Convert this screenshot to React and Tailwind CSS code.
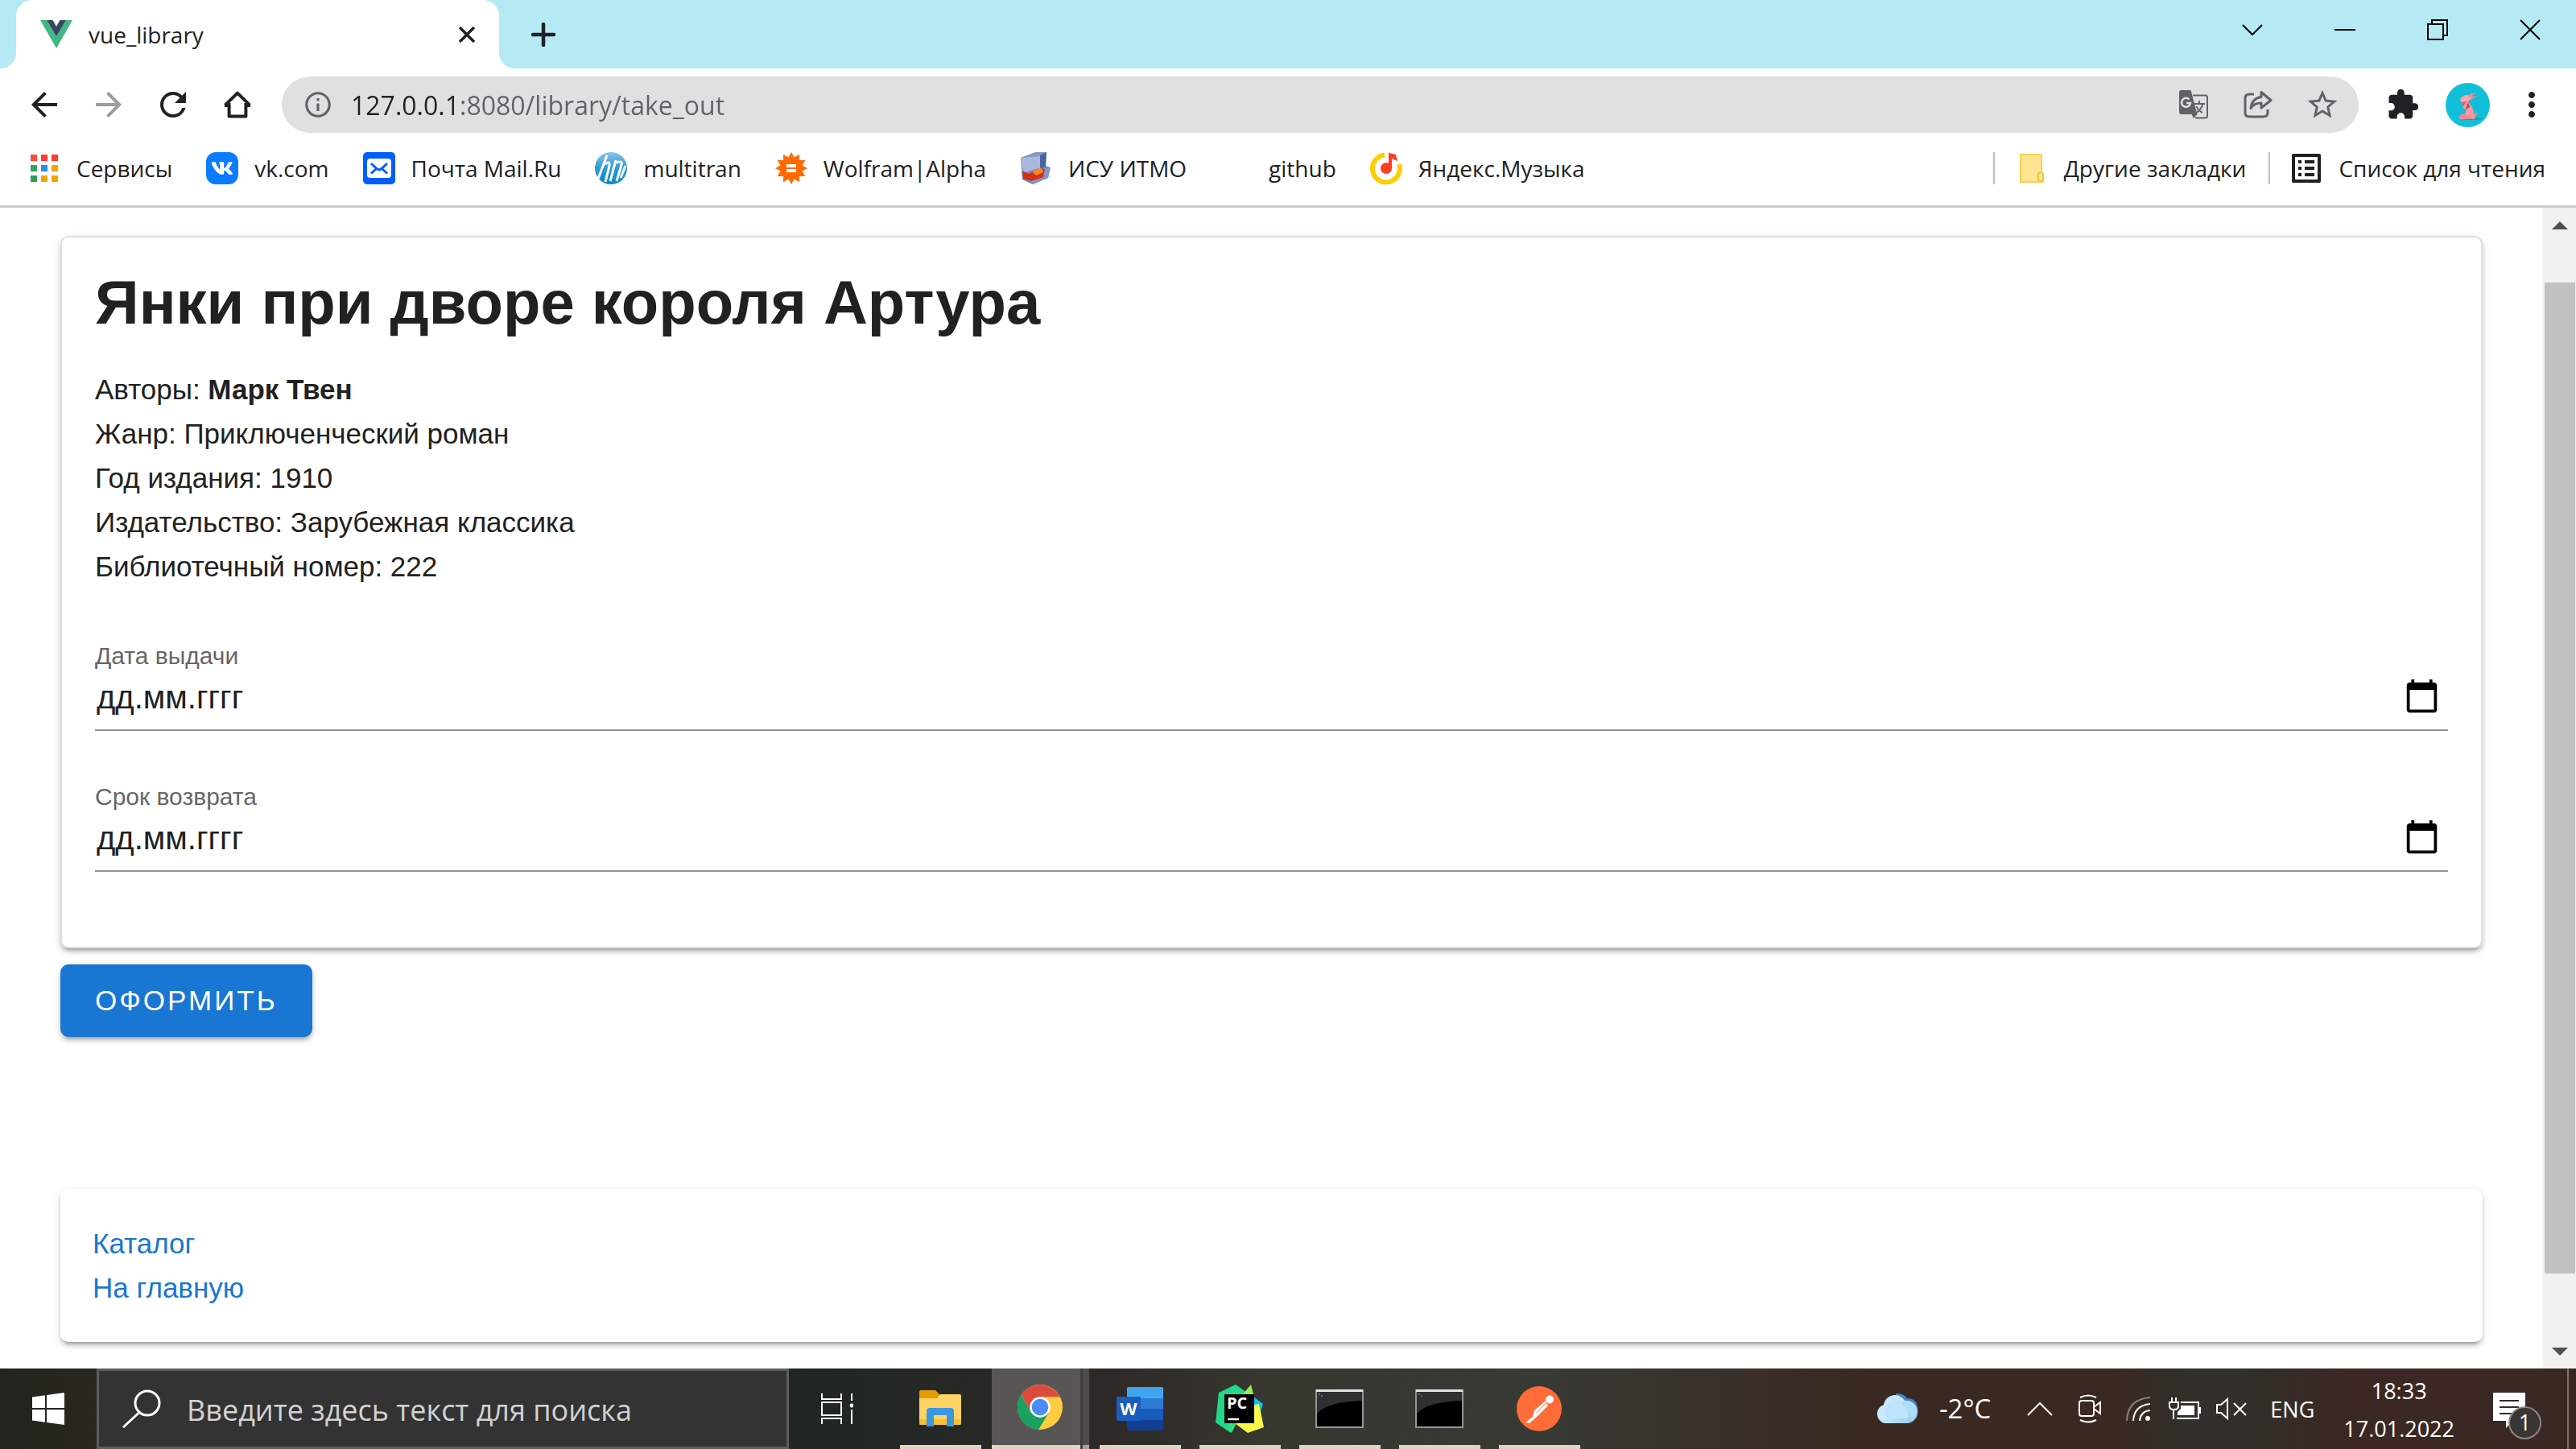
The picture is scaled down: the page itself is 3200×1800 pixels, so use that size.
import React from 'react';
import {
  MdArrowBack,
  MdArrowForward,
  MdRefresh,
  MdInfoOutline,
  MdStarBorder,
  MdExtension,
  MdMoreVert,
  MdListAlt,
  MdCalendarToday,
} from 'react-icons/md';
import { FaVk } from 'react-icons/fa';

/* ---------- Browser icons ---------- */

function VueLogo() {
  return (
    <svg viewBox="0 0 40 35" className="w-10 h-[35px]" aria-hidden="true">
      <path d="M0 0h8l12 20.500L32 0h8L20 35z" fill="#41b883" />
      <path d="M8 0h7.500L20 8l4.500-8H32L20 20.500z" fill="#35495e" />
    </svg>
  );
}

function HomeIcon() {
  return (
    <svg viewBox="0 0 24 24" className="size-12" fill="none" stroke="currentColor" strokeWidth="2" aria-hidden="true">
      <path d="M4.300 12.300 12 4.800l7.700 7.500M6.800 11v8.200h10.400V11" strokeLinejoin="round" />
      <path d="M4 12.500h2.800M17.200 12.500H20" />
    </svg>
  );
}

function TranslateIcon() {
  return (
    <svg viewBox="0 0 36 36" className="size-9" fill="none" aria-hidden="true">
      <path d="M17 6.500h15.500q2.500 0 2.500 2.500v23q0 2.500-2.500 2.500H20" stroke="currentColor" strokeWidth="2" />
      <path d="M3 0h11.500l8 30-4.500 5-2.500-5H3q-3 0-3-3V3q0-3 3-3z" fill="currentColor" />
      <path d="M12.500 11.500A5.500 5.500 0 1 0 14 16H9" stroke="#e0e0e0" strokeWidth="2.500" />
      <path d="M19 17h13M25 13v4M29.500 17q-2 7-8 11M21.500 20q2 5 7.500 8" stroke="currentColor" strokeWidth="2" />
    </svg>
  );
}

function ShareIcon() {
  return (
    <svg viewBox="0 0 36 36" className="size-9" fill="none" stroke="currentColor" strokeWidth="3" strokeLinejoin="round" aria-hidden="true">
      <path d="M13 5H7.500Q2 5 2 10v18q0 5 5.500 5h17q5.500 0 5.500-5v-4" />
      <path d="M22 2.500 34 12.500 22 22v-6q-9 0-13 6.500Q10.500 10 22 8.500z" />
    </svg>
  );
}

function Avatar() {
  return (
    <svg viewBox="0 0 55 55" className="size-[55px]" aria-hidden="true">
      <circle cx="27.500" cy="27.500" r="27.500" fill="#12bfd8" />
      <ellipse cx="33" cy="44.500" rx="13" ry="1.500" fill="#0a9db5" />
      <path d="M26 16 38 11l-6 6 8-1-9 5z" fill="#f08a93" />
      <path d="M18 20q3-5 9-5l5 4-4 4-9 1z" fill="#fba5ab" />
      <path d="M21 24l9-2-2 7-11-1 5-2z" fill="#e0656f" />
      <path d="M27 22l6 8 4 15H22l4-12-5-2z" fill="#fb9aa2" />
      <path d="M28 24l-3 9 5-3z" fill="#b8404d" />
      <path d="M17 45v-4l4-3 9 4 7 3zM36 38l4-2-1 4-3 1z" fill="#f48590" />
    </svg>
  );
}

/* ---------- Bookmark icons ---------- */

function AppsIcon() {
  const colors = ['#ff4a3d', '#ff3b30', '#ff3b30', '#34a35a', '#2b8cf0', '#f5a500', '#2f9e57', '#f2a600', '#f2a600'];
  return (
    <svg viewBox="0 0 40 40" className="size-10" aria-hidden="true">
      {colors.map((c, i) => (
        <rect key={i} x={3 + (i % 3) * 13} y={3 + Math.floor(i / 3) * 13} width="8" height="8" fill={c} />
      ))}
    </svg>
  );
}

function VkIcon() {
  return (
    <span className="flex size-10 items-center justify-center rounded-xl bg-[#0a7cff] text-white">
      <FaVk className="size-7" />
    </span>
  );
}

function MailIcon() {
  return (
    <svg viewBox="0 0 40 40" className="size-10" aria-hidden="true">
      <rect width="40" height="40" rx="5" fill="#005ff9" />
      <rect x="5" y="8" width="30" height="24" rx="4" fill="#fff" />
      <path d="M10 14l7 6.500q3 2.500 6 0l7-6.500M10 26.500l6-5.500M30 26.500l-6-5.500" fill="none" stroke="#005ff9" strokeWidth="3" />
    </svg>
  );
}

function MultitranIcon() {
  return (
    <svg viewBox="0 0 40 40" className="size-10" aria-hidden="true">
      <defs>
        <linearGradient id="mt" x1="0" y1="0" x2="0" y2="1">
          <stop offset="0" stopColor="#8fc0e8" />
          <stop offset=".5" stopColor="#2b9bd8" />
          <stop offset="1" stopColor="#0a86cc" />
        </linearGradient>
      </defs>
      <circle cx="20" cy="20" r="20" fill="url(#mt)" />
      <path d="M15 4 4 33M12 15q7-5 6 2l-5 20M26 10l-7 26M27 13q8-3 6 3l-6 20M38 17l-6 15" fill="none" stroke="#fff" strokeWidth="3" />
    </svg>
  );
}

function WolframIcon() {
  const points = Array.from({ length: 24 }, (_, i) => {
    const r = i % 2 ? 14 : 20;
    const a = (Math.PI * i) / 12 - Math.PI / 2;
    return `${20 + r * Math.cos(a)},${20 + r * Math.sin(a)}`;
  }).join(' ');
  return (
    <svg viewBox="0 0 40 40" className="size-10" aria-hidden="true">
      <polygon points={points} fill="#ff6a00" />
      <path d="M14 17h12M14 23h12" stroke="#fff" strokeWidth="4" />
    </svg>
  );
}

function IsuIcon() {
  return (
    <svg viewBox="0 0 40 40" className="size-10" aria-hidden="true">
      <path d="M1 7 20 0h13l-1 17 6 2-3 13-19 8L3 34z" fill="#7288bd" />
      <path d="M1 7 25 4l1 15L4 26z" fill="#a9b9dc" />
      <path d="M1 7 20 0h13l-8 5z" fill="#8798c4" />
      <path d="M25 4l8-4-1 18-7 3z" fill="#4a62a0" />
      <path d="M3 23l8 4 15-7 7 2-4 10-14 4-11-3z" fill="#d62f16" />
      <path d="M15 24l11-5 3 6-9 4z" fill="#ff8424" />
      <path d="M31 20l7-1-3 13-19 8-2-4 15-5z" fill="#8398c8" />
    </svg>
  );
}

function YandexMusicIcon() {
  return (
    <svg viewBox="0 0 40 40" className="size-10" aria-hidden="true">
      <path d="M18 3.500A17 17 0 1 0 36 15" fill="none" stroke="#ffcc00" strokeWidth="6" />
      <circle cx="20" cy="20" r="7" fill="#ff3d20" />
      <path d="M23 0q2 2 5 2l4 1 2 8-7-3v12h-4z" fill="#ff3d20" />
    </svg>
  );
}

function FolderIcon() {
  return (
    <svg viewBox="0 0 40 40" className="size-10" aria-hidden="true">
      <path d="M6 3h24q2 0 2 2v20l2 2v8q0 2-2 2H6z" fill="#ffe591" stroke="#f7d04f" strokeWidth="2" />
      <path d="M28 36V28q0-3 3-3t3 3v8z" fill="#ffe591" stroke="#f0c63f" strokeWidth="2" />
    </svg>
  );
}

/* ---------- Taskbar icons ---------- */

function WindowsLogo() {
  return (
    <svg viewBox="0 0 40 40" className="size-10" fill="#fff" aria-hidden="true">
      <path d="M0 5.500 16 3.200V19H0zM18 3l22-3v19H18zM0 21h16v15.800L0 34.500zM18 21h22v19l-22-3z" />
    </svg>
  );
}

function SearchIcon() {
  return (
    <svg viewBox="0 0 48 48" className="size-12" fill="none" stroke="#fff" strokeWidth="3" aria-hidden="true">
      <circle cx="31" cy="17" r="15" />
      <path d="M21 28.500 1 47" />
    </svg>
  );
}

function TaskViewIcon() {
  return (
    <svg viewBox="0 0 40 38" className="h-[38px] w-10" fill="none" stroke="#fff" strokeWidth="2" aria-hidden="true">
      <path d="M1 0v7h24V0M1 11h24v16H1zM1 38v-7h24v7M38 0v9M38 20v18" />
      <circle cx="38" cy="15" r="2.500" fill="#fff" stroke="none" />
    </svg>
  );
}

function ExplorerIcon() {
  return (
    <svg viewBox="0 0 54 46" className="h-[46px] w-[54px]" aria-hidden="true">
      <path d="M1 2q0-2 2-2h18l5 5v5H1z" fill="#e19c00" />
      <path d="M1 10h22l4-5h24q2 0 2 2v34q0 2-2 2H3q-2 0-2-2z" fill="#ffd463" />
      <path d="M1 36h52v5q0 2-2 2H3q-2 0-2-2z" fill="#f7bf35" />
      <path d="M10 45V26q0-4 4-4h26q4 0 4 4v19h-9V31H19v14z" fill="#3b98e0" />
    </svg>
  );
}

function ChromeIcon() {
  return (
    <svg viewBox="0 0 56 56" className="size-14" aria-hidden="true">
      <circle cx="28" cy="28" r="28" fill="#ffcd40" />
      <path d="M52.500 15.200H28L28 28 16.700 34.500 4.500 12.700A28 28 0 0 1 52.500 15.200z" fill="#de4b3e" />
      <path d="M4.500 12.700A28 28 0 0 0 26 55.900L39.200 34.500 28 41 16.700 34.500z" fill="#18a160" />
      <circle cx="28" cy="28" r="12.800" fill="#fff" />
      <circle cx="28" cy="28" r="10.300" fill="#4a8cf7" />
    </svg>
  );
}

function WordIcon() {
  return (
    <svg viewBox="0 0 58 54" className="h-[54px] w-[58px]" aria-hidden="true">
      <path d="M13 2q0-2 2-2h41q2 0 2 2v12H13z" fill="#41a5ee" />
      <path d="M13 14h45v13H13z" fill="#2b7cd3" />
      <path d="M13 27h45v14H13z" fill="#185abd" />
      <path d="M13 41h45v11q0 2-2 2H15q-2 0-2-2z" fill="#103f91" />
      <rect y="12" width="30" height="30" rx="2" fill="#1a5dbe" />
      <text x="15" y="35" textAnchor="middle" fontFamily="Open Sans, sans-serif" fontWeight="700" fontSize="22" fill="#fff">W</text>
    </svg>
  );
}

function PyCharmIcon() {
  return (
    <svg viewBox="0 0 60 60" className="size-[60px]" aria-hidden="true">
      <path d="M4 10 25 0l14 10-14 35-6 15L0 47z" fill="#21d789" />
      <path d="M32 14 44 0l4 15z" fill="#9be85a" />
      <path d="M46 14 59 24 52 45 44 40z" fill="#07c3f2" />
      <path d="M12 48 20 30 54 24 60 53 40 60 24 48z" fill="#fcf84a" />
      <path d="M8 40l14-10 4 18-6 12z" fill="#35dc7c" />
      <rect x="11" y="12" width="37" height="36" fill="#000" />
      <text x="14" y="30" fontFamily="Open Sans, sans-serif" fontWeight="700" fontSize="20" fill="#fff">PC</text>
      <path d="M15 43h14" stroke="#fff" strokeWidth="2.500" />
    </svg>
  );
}

function ConsoleIcon() {
  return (
    <svg viewBox="0 0 60 48" className="h-12 w-[60px]" aria-hidden="true">
      <rect width="60" height="48" fill="#8f979c" />
      <rect x="1" width="58" height="3" fill="#dfe5e8" />
      <rect x="2" y="3" width="56" height="43" fill="#000" />
      <path d="M2 3h56v11Q16 15 2 30z" fill="#303030" />
      <path d="M4 6h2M7 8h2" stroke="#999" strokeWidth="1" />
    </svg>
  );
}

function PostmanIcon() {
  return (
    <svg viewBox="0 0 56 56" className="size-14" aria-hidden="true">
      <circle cx="28" cy="28" r="28" fill="#ff6c37" />
      <circle cx="41" cy="16.500" r="5" fill="#fff" />
      <path d="M36 18 22 30l-2 8-9 7 5 1 9-8 14-14z" fill="#fff" />
      <path d="M37 20 25 33M40 23l-3 8" stroke="#ff6c37" strokeWidth="1" />
    </svg>
  );
}

function CloudIcon() {
  return (
    <svg viewBox="0 0 54 38" className="h-[38px] w-[54px]" aria-hidden="true">
      <defs>
        <linearGradient id="cl" x1="0" y1="0" x2="1" y2="1">
          <stop offset="0" stopColor="#c5e9fb" />
          <stop offset=".5" stopColor="#c9e9fb" />
          <stop offset="1" stopColor="#8cc9ee" />
        </linearGradient>
      </defs>
      <path d="M26 0q10 0 14 6 13 0 13 14L30 22z" fill="#3d87cd" />
      <path d="M12 37A12 12 0 0 1 11 14 14 14 0 0 1 37 9a14 14 0 0 1 4 28z" fill="url(#cl)" />
      <path d="M30 13q14-8 20 4 3 10-4 15-4-16-16-19z" fill="#aedcf6" />
      <path d="M16 31A9 9 0 0 1 15 17q4-14 17-8L42 28q-2 3-6 3z" fill="#bde5fc" />
    </svg>
  );
}

function ChevronUpIcon() {
  return (
    <svg viewBox="0 0 32 17" className="h-[17px] w-8" fill="none" stroke="#fff" strokeWidth="2" aria-hidden="true">
      <path d="M1 16 16 1l15 15" />
    </svg>
  );
}

function MeetIcon() {
  return (
    <svg viewBox="0 0 28 36" className="h-9 w-7" fill="none" stroke="#fff" strokeWidth="2" aria-hidden="true">
      <rect x="1" y="8" width="18" height="19" rx="3" />
      <path d="M19 16l8-6v14l-8-6M2 4q10-5 20 0M2 32q10 5 20 0" />
    </svg>
  );
}

function WifiIcon() {
  return (
    <svg viewBox="0 0 30 30" className="size-[30px]" fill="none" stroke="#fff" strokeWidth="2" aria-hidden="true">
      <path d="M1 30Q2 3 30 1" stroke="#8d807b" />
      <path d="M9 30Q10 11 30 9M17 30q1-12 13-13" />
      <circle cx="27" cy="27" r="3" fill="#fff" stroke="none" />
    </svg>
  );
}

function BatteryIcon() {
  return (
    <svg viewBox="0 0 40 28" className="h-7 w-10" fill="none" stroke="#fff" strokeWidth="2" aria-hidden="true">
      <path d="M15 6h22v20H10M6 27V15M4 0v6M9 0v6M1 6h11v5q0 4-5.500 4T1 11z" />
      <path d="M15 10h17v12H11v-4l4-4zM37 12h3v8h-3z" fill="#fff" stroke="none" />
    </svg>
  );
}

function MutedIcon() {
  return (
    <svg viewBox="0 0 38 28" className="h-7 w-[38px]" fill="none" stroke="#fff" strokeWidth="2" aria-hidden="true">
      <path d="M1 9h5l8-7v24l-8-7H1zM22 7l15 15M37 7 22 22" />
    </svg>
  );
}

/* ---------- Data ---------- */

const bookmarks = [
  { label: 'Сервисы', icon: <AppsIcon /> },
  { label: 'vk.com', icon: <VkIcon /> },
  { label: 'Почта Mail.Ru', icon: <MailIcon /> },
  { label: 'multitran', icon: <MultitranIcon /> },
  { label: 'Wolfram|Alpha', icon: <WolframIcon /> },
  { label: 'ИСУ ИТМО', icon: <IsuIcon /> },
  { label: 'github', icon: <span className="size-10" /> },
  { label: 'Яндекс.Музыка', icon: <YandexMusicIcon /> },
];

const apps = [
  { label: 'Проводник', icon: <ExplorerIcon /> },
  { label: 'Google Chrome', icon: <ChromeIcon />, active: true },
  { label: 'Word', icon: <WordIcon /> },
  { label: 'PyCharm', icon: <PyCharmIcon /> },
  { label: 'Командная строка', icon: <ConsoleIcon /> },
  { label: 'Командная строка 2', icon: <ConsoleIcon /> },
  { label: 'Postman', icon: <PostmanIcon /> },
];

/* ---------- Browser chrome ---------- */

function TabStrip() {
  return (
    <div className="flex h-[85px] shrink-0 bg-[#b5e9f3]">
      <span className="size-5 self-end bg-[radial-gradient(circle_at_0_0,transparent_20px,white_20px)]" />
      <div className="flex w-[600px] items-center rounded-t-[20px] bg-white pl-[30px] pr-5">
        <VueLogo />
        <span className="ml-5 flex-1 text-[28px]">vue_library</span>
        <button type="button" aria-label="Закрыть вкладку" className="flex size-10 items-center justify-center">
          <svg viewBox="0 0 20 20" className="size-5" stroke="currentColor" strokeWidth="3.500" aria-hidden="true">
            <path d="M1 1l18 18M19 1 1 19" />
          </svg>
        </button>
      </div>
      <span className="size-5 self-end bg-[radial-gradient(circle_at_100%_0,transparent_20px,white_20px)]" />
      <button type="button" aria-label="Новая вкладка" className="ml-5 flex w-[30px] items-center justify-center">
        <svg viewBox="0 0 30 30" className="size-[30px]" stroke="currentColor" strokeWidth="4.500" strokeLinecap="round" aria-hidden="true">
          <path d="M2 15h26M15 2v26" />
        </svg>
      </button>
      <div className="ml-auto flex h-[73px] items-center text-black">
        <button type="button" aria-label="Поиск вкладок" className="flex h-full w-[115px] items-center justify-center">
          <svg viewBox="0 0 26 14" className="h-3.5 w-[26px]" fill="none" stroke="currentColor" strokeWidth="2" aria-hidden="true">
            <path d="M1 1l12 12L25 1" />
          </svg>
        </button>
        <button type="button" aria-label="Свернуть" className="flex h-full w-[115px] items-center justify-center">
          <span className="h-0.5 w-[26px] bg-black" />
        </button>
        <button type="button" aria-label="Свернуть в окно" className="flex h-full w-[115px] items-center justify-center">
          <svg viewBox="0 0 26 26" className="size-[26px]" fill="none" stroke="currentColor" strokeWidth="2" aria-hidden="true">
            <path d="M1 6h19v19H1zM6 6V1h19v19h-5" />
          </svg>
        </button>
        <button type="button" aria-label="Закрыть" className="flex h-full w-[115px] items-center justify-center">
          <svg viewBox="0 0 26 26" className="size-[26px]" stroke="currentColor" strokeWidth="2" aria-hidden="true">
            <path d="M1 1l24 24M25 1 1 25" />
          </svg>
        </button>
      </div>
    </div>
  );
}

function Toolbar() {
  return (
    <div className="flex h-[90px] shrink-0 items-center pl-[31px] pr-[15px]">
      <div className="flex gap-8">
        <button type="button" aria-label="Назад"><MdArrowBack className="size-12" /></button>
        <button type="button" aria-label="Вперёд" className="text-[#9b9c9e]"><MdArrowForward className="size-12" /></button>
        <button type="button" aria-label="Обновить"><MdRefresh className="size-12" /></button>
        <button type="button" aria-label="Домой"><HomeIcon /></button>
      </div>
      <div className="ml-[31px] flex h-[70px] flex-1 items-center rounded-full bg-[#e0e0e0] pl-[26px] pr-[5px] text-[#5f6368]">
        <MdInfoOutline className="size-[38px] shrink-0" />
        <input
          type="text"
          aria-label="Адресная строка"
          defaultValue="127.0.0.1:8080/library/take_out"
          className="ml-[22px] h-[50px] min-w-0 flex-1 bg-[linear-gradient(90deg,#202124_135px,#5f6368_135px)] bg-clip-text text-[32px] text-transparent outline-none"
        />
        <button type="button" aria-label="Перевести" className="flex w-20 justify-center"><TranslateIcon /></button>
        <button type="button" aria-label="Поделиться" className="flex w-20 justify-center"><ShareIcon /></button>
        <button type="button" aria-label="Добавить в закладки" className="flex w-20 justify-center"><MdStarBorder className="size-11" /></button>
      </div>
      <div className="ml-[15px] flex items-center">
        <button type="button" aria-label="Расширения" className="flex w-20 justify-center"><MdExtension className="size-[42px]" /></button>
        <button type="button" aria-label="Профиль" className="flex w-20 justify-center"><Avatar /></button>
        <button type="button" aria-label="Меню" className="flex w-20 justify-center"><MdMoreVert className="size-12" /></button>
      </div>
    </div>
  );
}

function BookmarksBar() {
  return (
    <nav aria-label="Закладки" className="flex h-[83px] shrink-0 items-center border-b-[3px] border-[#cccccc] pb-3 pl-[35px] pr-[38px] text-[28px]">
      <div className="flex gap-[42px]">
        {bookmarks.map((b) => (
          <a key={b.label} href="#" className="flex items-center gap-5 whitespace-nowrap">
            {b.icon}
            {b.label}
          </a>
        ))}
      </div>
      <div className="ml-auto flex items-center">
        <span className="h-10 w-0.5 bg-[#bdbdbd]" />
        <button type="button" className="ml-[26px] flex items-center gap-5 whitespace-nowrap">
          <FolderIcon />
          Другие закладки
        </button>
        <span className="ml-[28px] h-10 w-0.5 bg-[#bdbdbd]" />
        <button type="button" className="ml-[21px] flex items-center gap-4 whitespace-nowrap">
          <MdListAlt className="size-12" />
          Список для чтения
        </button>
      </div>
    </nav>
  );
}

/* ---------- Page ---------- */

function DateField({ id, label }) {
  return (
    <div>
      <label htmlFor={id} className="block text-[30px] leading-10 text-[#666666]">{label}</label>
      <div className="mt-1.5 flex items-center border-b-2 border-[#949494] pb-[15px]">
        <input
          id={id}
          type="text"
          placeholder="дд.мм.гггг"
          className="h-[50px] min-w-0 flex-1 pl-0.5 text-[40px] leading-[50px] outline-none placeholder:text-[#212121]"
        />
        <button type="button" aria-label={`${label}: открыть календарь`} className="mb-1 mr-2.5 flex text-black">
          <MdCalendarToday className="size-[45px]" />
        </button>
      </div>
    </div>
  );
}

const cardShadow =
  'rounded-[10px] bg-white shadow-[0_7px_3px_-5px_rgba(0,0,0,0.2),0_5px_5px_0_rgba(0,0,0,0.14),0_3px_12px_0_rgba(0,0,0,0.12)]';

function Page() {
  return (
    <main className="min-w-0 flex-1 overflow-hidden bg-white px-[75px] pt-[35px] font-['Liberation_Sans',Arial,sans-serif] text-[35px] leading-[55px] text-[#212121]">
      <section className={`${cardShadow} border-2 border-[#e0e0e0] px-[41px] pb-[93px] pt-[43px]`}>
        <h1 className="mb-[42px] text-[76px] font-bold leading-[76px]">Янки при дворе короля Артура</h1>
        <p>Авторы: <b>Марк Твен</b></p>
        <p>Жанр: Приключенческий роман</p>
        <p>Год издания: 1910</p>
        <p>Издательство: Зарубежная классика</p>
        <p>Библиотечный номер: 222</p>
        <form className="mt-16 flex flex-col gap-[62px]">
          <DateField id="issued" label="Дата выдачи" />
          <DateField id="due" label="Срок возврата" />
        </form>
      </section>
      <button
        type="button"
        className="mt-5 block h-[90px] rounded-[10px] bg-[#1976d2] px-[43px] pb-0.5 tracking-[3px] text-white shadow-[0_7px_3px_-5px_rgba(0,0,0,0.2),0_5px_5px_0_rgba(0,0,0,0.14),0_3px_12px_0_rgba(0,0,0,0.12)]"
      >
        ОФОРМИТЬ
      </button>
      <nav aria-label="Навигация" className={`${cardShadow} mt-[189px] flex flex-col items-start p-10 text-[#1976d2]`}>
        <a href="#">Каталог</a>
        <a href="#">На главную</a>
      </nav>
    </main>
  );
}

function Scrollbar() {
  return (
    <div className="flex w-[41px] shrink-0 flex-col items-center bg-[#f1f1f1] pb-4 pt-[17px]" aria-hidden="true">
      <svg viewBox="0 0 20 10" className="h-2.5 w-5" fill="#505050"><path d="M0 10 10 0l10 10z" /></svg>
      <div className="mt-[66px] w-[38px] flex-[1231] bg-[#c1c1c1]" />
      <div className="flex-[92]" />
      <svg viewBox="0 0 20 10" className="h-2.5 w-5" fill="#505050"><path d="M0 0h20L10 10z" /></svg>
    </div>
  );
}

/* ---------- Taskbar ---------- */

function AppButton({ app }) {
  if (app.active) {
    return (
      <button type="button" aria-label={app.label} className="-mx-2.5 flex w-[121px] gap-[3px] bg-[#3e3d3b]">
        <span className="flex h-full w-[110px] flex-col bg-[#575655]">
          <span className="flex flex-1 items-center pl-8">{app.icon}</span>
          <span className="h-[5px] bg-[#dfd3c1]" />
        </span>
        <span className="flex h-full flex-1 flex-col justify-end bg-[#4e4c4b]">
          <span className="h-[5px] bg-[#aaa297]" />
        </span>
      </button>
    );
  }
  return (
    <button type="button" aria-label={app.label} className="flex w-[101px] flex-col">
      <span className="flex w-full flex-1 items-center justify-center pr-0.5 pt-1">{app.icon}</span>
      <span className="h-[5px] w-full bg-[#dfd3c1]" />
    </button>
  );
}

function Taskbar() {
  return (
    <footer className="flex h-[100px] shrink-0 bg-[linear-gradient(90deg,#22231d_0%,#29291f_4%,#202723_31%,#212823_33%,#2e2927_43%,#36372f_49%,#383a34_60%,#39302a_67%,#3a2822_73%,#3a2822_82%,#31302a_85%,#31302a_87%,#3b2824_91%,#3a2823_100%)] text-white">
      <button type="button" aria-label="Пуск" className="flex w-[120px] items-center justify-center">
        <WindowsLogo />
      </button>
      <label className="flex w-[860px] items-center border-[3px] border-[#5d5d5d] bg-[#333333] pl-[29px]">
        <SearchIcon />
        <input
          type="text"
          aria-label="Поиск"
          placeholder="Введите здесь текст для поиска"
          className="ml-8 min-w-0 flex-1 pt-1 text-[36px] outline-none placeholder:text-[#d2d2d2]"
        />
      </label>
      <button type="button" aria-label="Представление задач" className="flex w-[120px] items-center justify-center">
        <TaskViewIcon />
      </button>
      <div className="ml-[18px] flex gap-[23px]">
        {apps.map((a) => (
          <AppButton key={a.label} app={a} />
        ))}
      </div>
      <div className="ml-auto flex items-center">
        <button type="button" className="flex items-center gap-[26px] whitespace-nowrap text-[33px]">
          <CloudIcon />
          -2°C
        </button>
        <button type="button" aria-label="Скрытые значки" className="ml-[45px]"><ChevronUpIcon /></button>
        <span className="ml-8 flex items-center gap-[31px]">
          <MeetIcon />
          <WifiIcon />
        </span>
        <span className="ml-[23px] flex items-center gap-[19px]">
          <BatteryIcon />
          <MutedIcon />
        </span>
        <button type="button" className="ml-[29px] pt-0.5 text-[27px]">ENG</button>
        <time dateTime="2022-01-17T18:33" className="ml-9 flex flex-col pt-0.5 text-center text-[27px] leading-[47px]">
          <span>18:33</span>
          <span>17.01.2022</span>
        </time>
        <button type="button" aria-label="Уведомления: 1" className="relative ml-12 h-[100px] w-[60px]">
          <svg viewBox="0 0 40 44" className="mt-1 h-11 w-10" aria-hidden="true">
            <path d="M0 0h40v35H24l-8 9v-9H0z" fill="#fff" />
            <path d="M8 10h24M8 18h24M8 26h24" stroke="#3a2823" strokeWidth="2" />
          </svg>
          <span className="absolute bottom-3 right-0 flex size-[41px] items-center justify-center rounded-full border-2 border-[#8b8683] bg-[#3a3634] text-[27px]">1</span>
        </button>
        <span className="ml-8 mr-[9px] h-[100px] w-0.5 bg-[#7d7370]" />
      </div>
    </footer>
  );
}

export default function App() {
  return (
    <div className="flex h-screen flex-col overflow-hidden bg-white font-['Open_Sans','Noto_Sans',sans-serif] text-[#202124]">
      <TabStrip />
      <Toolbar />
      <BookmarksBar />
      <div className="flex min-h-0 flex-1">
        <Page />
        <Scrollbar />
      </div>
      <Taskbar />
    </div>
  );
}
